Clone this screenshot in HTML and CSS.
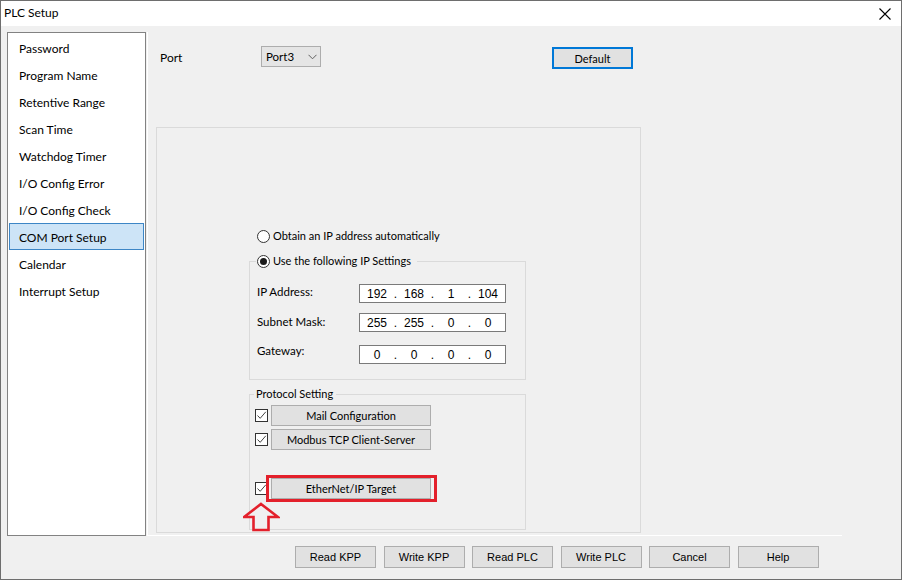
FILE: index.html
```html
<!DOCTYPE html>
<html>
<head>
<meta charset="utf-8">
<title>PLC Setup</title>
<link rel="stylesheet" href="styles.css">
</head>
<body>
<div class="window">
  <div class="titlebar">
    <span class="title">PLC Setup</span>
    <span class="close"><svg width="12" height="12" viewBox="0 0 12 12"><path d="M0.5 0.5 L11.5 11.5 M11.5 0.5 L0.5 11.5" stroke="#000" stroke-width="1.1" fill="none"/></svg></span>
  </div>
  <div class="body">
    <div class="content">
      <ul class="nav">
        <li>Password</li>
        <li>Program Name</li>
        <li>Retentive Range</li>
        <li>Scan Time</li>
        <li>Watchdog Timer</li>
        <li>I/O Config Error</li>
        <li>I/O Config Check</li>
        <li class="selected">COM Port Setup</li>
        <li>Calendar</li>
        <li>Interrupt Setup</li>
      </ul>
      <div class="panel">
        <div class="port-row">
          <span class="port-label">Port</span>
          <span class="combo">Port3<svg class="chev" width="9" height="6" viewBox="0 0 9 6"><path d="M0.5 0.8 L4.5 4.8 L8.5 0.8" stroke="#606060" stroke-width="1" fill="none"/></svg></span>
          <span class="btn btn-default">Default</span>
        </div>
        <div class="box">
          <div class="radio-row first-radio">
            <span class="radio"></span><span>Obtain an IP address automatically</span>
          </div>
          <fieldset class="group ip-group">
            <legend class="legend-radio"><span class="radio checked"></span><span>Use the following IP Settings</span></legend>
            <div class="ip-row r1">
              <span class="ip-label">IP Address:</span>
              <span class="ip-field"><span class="seg">192</span><span class="dot">.</span><span class="seg">168</span><span class="dot">.</span><span class="seg">1</span><span class="dot">.</span><span class="seg">104</span></span>
            </div>
            <div class="ip-row r2">
              <span class="ip-label">Subnet Mask:</span>
              <span class="ip-field"><span class="seg">255</span><span class="dot">.</span><span class="seg">255</span><span class="dot">.</span><span class="seg">0</span><span class="dot">.</span><span class="seg">0</span></span>
            </div>
            <div class="ip-row r3">
              <span class="ip-label">Gateway:</span>
              <span class="ip-field"><span class="seg">0</span><span class="dot">.</span><span class="seg">0</span><span class="dot">.</span><span class="seg">0</span><span class="dot">.</span><span class="seg">0</span></span>
            </div>
          </fieldset>
          <fieldset class="group proto-group">
            <legend class="proto-legend">Protocol Setting</legend>
            <div class="check-row c1">
              <span class="check"><svg width="11" height="11" viewBox="0 0 11 11"><path d="M1.5 5.5 L4.2 8.3 L9.8 1.8" stroke="#444" stroke-width="1" fill="none"/></svg></span>
              <span class="btn btn-proto">Mail Configuration</span>
            </div>
            <div class="check-row c2">
              <span class="check"><svg width="11" height="11" viewBox="0 0 11 11"><path d="M1.5 5.5 L4.2 8.3 L9.8 1.8" stroke="#444" stroke-width="1" fill="none"/></svg></span>
              <span class="btn btn-proto">Modbus TCP Client-Server</span>
            </div>
            <div class="check-row c3">
              <span class="check"><svg width="11" height="11" viewBox="0 0 11 11"><path d="M1.5 5.5 L4.2 8.3 L9.8 1.8" stroke="#444" stroke-width="1" fill="none"/></svg></span>
              <span class="btn btn-proto highlighted">EtherNet/IP Target</span>
            </div>
          </fieldset>
          <svg class="arrow" width="37" height="30" viewBox="0 0 37 30"><path d="M18 2 L35 15 L25.5 15 L25.5 28 L10.5 28 L10.5 15 L1 15 Z" stroke="#e3202b" stroke-width="2.6" fill="none" stroke-linejoin="miter"/></svg>
        </div>
      </div>
    </div>
    <div class="footer">
      <span class="btn btn-foot">Read KPP</span>
      <span class="btn btn-foot">Write KPP</span>
      <span class="btn btn-foot">Read PLC</span>
      <span class="btn btn-foot">Write PLC</span>
      <span class="btn btn-foot">Cancel</span>
      <span class="btn btn-foot">Help</span>
    </div>
  </div>
</div>
</body>
</html>
```

FILE: styles.css
```css
* { box-sizing: border-box; }
html, body { margin: 0; padding: 0; }
body {
  width: 902px;
  height: 580px;
  overflow: hidden;
  background: #f0f0f0;
  font-family: Lato, "Noto Sans", sans-serif;
  font-size: 12px;
  color: #000;
}
.window {
  width: 902px;
  height: 580px;
  border: 1px solid #6e6e6e;
  background: #f0f0f0;
  display: flex;
  flex-direction: column;
}
.titlebar {
  height: 25px;
  background: #fff;
  display: flex;
  align-items: center;
  justify-content: space-between;
  padding: 0 10px 0 3px;
  flex: none;
}
.title { font-size: 12px; line-height: 16px; margin-top: -1px; }
.close { display: flex; width: 12px; height: 12px; margin-top: 1px; }
.body { flex: 1; display: flex; flex-direction: column; }
.content {
  display: flex;
  margin: 6px 0 0 6px;
  height: 504px;
}
.nav {
  list-style: none;
  margin: 0;
  padding: 1px 1px 0 1px;
  width: 139px;
  height: 504px;
  background: #fff;
  border: 1px solid #828282;
}
.nav li {
  height: 27px;
  line-height: 23px;
  padding: 2px 0 0 9px;
  border: 1px solid transparent;
  white-space: nowrap;
}
.nav li.selected {
  background: #cde4f7;
  border-color: #3d86c6;
}
.panel {
  margin-left: 1px;
  width: 695px;
  height: 504px;
  border-left: 1px solid #fff;
  border-bottom: 1px solid #fff;
  padding: 14px 0 0 8px;
}
.port-row {
  display: flex;
  align-items: flex-start;
  height: 22px;
  padding-left: 4px;
}
.port-label { width: 101px; line-height: 24px; }
.combo {
  width: 60px;
  height: 21px;
  border: 1px solid #adadad;
  background: #e5e5e5;
  display: flex;
  align-items: center;
  justify-content: space-between;
  padding: 0 3px 0 4px;
  line-height: 19px;
  font-size: 11.5px;
}
.chev { margin-top: 1px; }
.btn {
  display: flex;
  align-items: center;
  justify-content: center;
  background: #e1e1e1;
  border: 1px solid #adadad;
  white-space: nowrap;
}
.btn-default {
  margin-left: 231px;
  margin-top: 1px;
  width: 81px;
  height: 22px;
  border: 2px solid #0078d7;
  font-size: 11px;
}
.box {
  position: relative;
  margin-top: 59px;
  width: 485px;
  height: 406px;
  border: 1px solid #dadada;
  padding: 100px 0 0 92px;
}
.radio-row,
.legend-radio {
  display: flex;
  align-items: center;
  height: 16px;
  line-height: 16px;
  font-size: 11px;
}
.first-radio { margin-left: 8px; }
.radio {
  width: 13px;
  height: 13px;
  border: 1px solid #333;
  border-radius: 50%;
  background: #fff;
  margin-right: 3px;
  display: flex;
  align-items: center;
  justify-content: center;
  flex: none;
}
.radio.checked::after {
  content: "";
  width: 7px;
  height: 7px;
  border-radius: 50%;
  background: #1a1a1a;
}
.group {
  margin: 0;
  min-width: 0;
  width: 277px;
  border: 1px solid #dadada;
}
.ip-group {
  margin-top: 9px;
  padding: 0 0 15px 7px;
}
.legend-radio {
  margin-left: -1px;
  padding: 0 6px 0 1px;
}
.ip-row {
  display: flex;
  align-items: flex-start;
  height: 19px;
}
.ip-row.r1 { margin-top: 15px; }
.ip-row.r2 { margin-top: 10px; }
.ip-row.r3 { margin-top: 13px; }
.ip-label { width: 102px; line-height: 16px; font-size: 11.5px; }
.r1 .ip-label { margin-top: 0; }
.r2 .ip-label { margin-top: 1px; }
.r3 .ip-label { margin-top: -2px; }
.ip-field {
  width: 147px;
  height: 19px;
  border: 1px solid #7a7a7a;
  background: #fff;
  display: flex;
  align-items: center;
  padding-left: 1px;
  font-family: "Liberation Sans", Arial, sans-serif;
  font-size: 12px;
}
.seg { width: 32px; text-align: center; }
.dot { width: 5px; text-align: center; }
.proto-group {
  margin-top: 6px;
  padding: 0 0 30px 5px;
}
.proto-legend {
  margin-left: -1px;
  padding: 0 3px 0 2px;
  line-height: 16px;
  font-size: 11px;
}
.check-row {
  display: flex;
  align-items: center;
  height: 21px;
}
.check-row.c1 { margin-top: 3px; }
.check-row.c2 { margin-top: 3px; }
.check-row.c3 { margin-top: 28px; }
.check {
  width: 13px;
  height: 13px;
  border: 1px solid #333;
  background: #fff;
  display: flex;
  align-items: center;
  justify-content: center;
  margin-right: 3px;
  flex: none;
}
.btn-proto {
  width: 160px;
  height: 21px;
  font-size: 11px;
}
.highlighted { position: relative; }
.highlighted::after {
  content: "";
  position: absolute;
  top: -4px;
  bottom: -4px;
  left: -6px;
  right: -7px;
  border: 3px solid #e3202b;
}
.arrow {
  position: absolute;
  left: 86px;
  top: 374px;
}
.footer {
  display: flex;
  gap: 7.5px;
  margin-top: 10px;
  padding-left: 294px;
}
.btn-foot {
  width: 81px;
  height: 22px;
  font-family: "Liberation Sans", Arial, sans-serif;
  font-size: 11px;
}
```
